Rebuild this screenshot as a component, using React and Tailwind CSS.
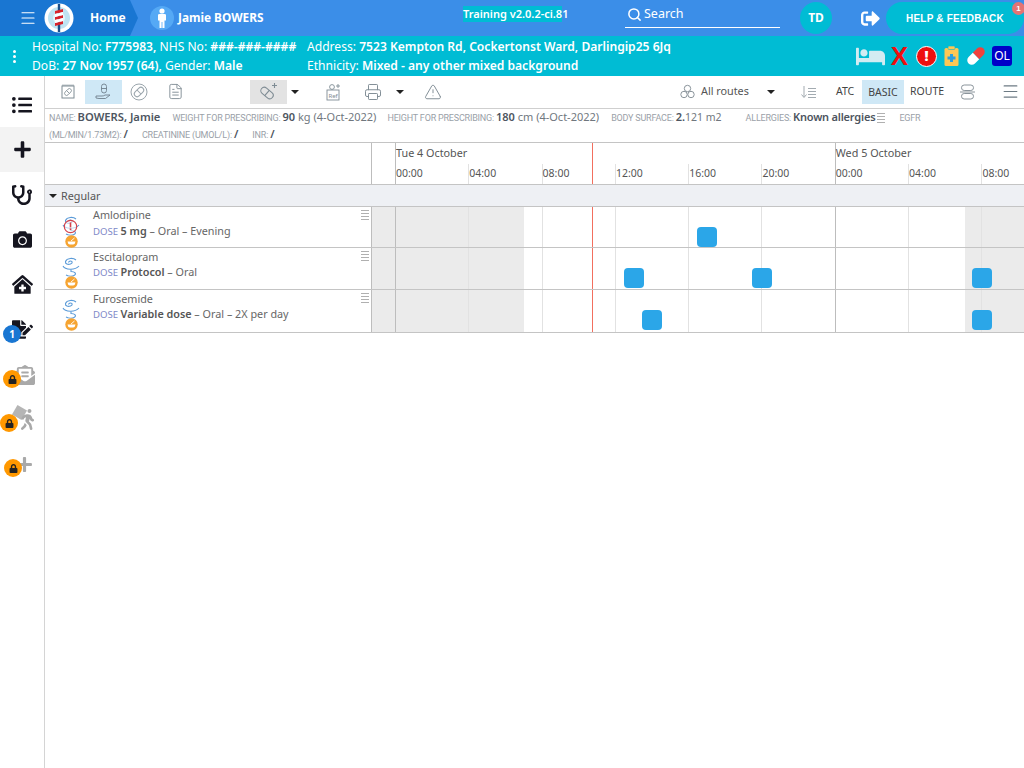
import React from "react";
import {
  FaBed,
  FaCamera,
  FaClinicMedical,
  FaEnvelopeOpenText,
  FaFileSignature,
  FaListUl,
  FaLock,
  FaPlus,
  FaStethoscope,
  FaSignOutAlt,
  FaWalking,
} from "react-icons/fa";
import { Search, Menu, TriangleAlert, Printer, FileText } from "lucide-react";

const hours = ["00:00", "04:00", "08:00", "12:00", "16:00", "20:00", "00:00", "04:00", "08:00"];

const drugs = [
  { name: "Amlodipine", dose: "5 mg", rest: " – Oral – Evening", alert: true, h: "h-[41px]", doses: [{ x: 302, y: 20 }] },
  { name: "Escitalopram", dose: "Protocol", rest: " – Oral", h: "h-[42px]", doses: [{ x: 229, y: 20 }, { x: 357, y: 20 }, { x: 577, y: 20 }] },
  { name: "Furosemide", dose: "Variable dose", rest: " – Oral – 2X per day", h: "h-[43px]", doses: [{ x: 247, y: 20 }, { x: 577, y: 20 }] },
];

const Caret = ({ className = "" }) => (
  <span className={`inline-block w-0 h-0 border-l-[4px] border-r-[4px] border-t-[4px] border-l-transparent border-r-transparent border-t-[#222] ${className}`} />
);

const Logo = () => (
  <svg width="30" height="30" viewBox="0 0 30 30" className="ml-[7px] shrink-0">
    <circle cx="15" cy="15" r="14.5" fill="#fff" />
    <circle cx="15" cy="15" r="11" fill="#bfe4f2" />
    <circle cx="15" cy="15" r="6" fill="#e4f4fa" />
    <rect x="13.8" y="1" width="2.4" height="28" fill="#1b4f8a" />
    <path d="M11 8 L19 6 L19 9 L11 11 Z M11 14 L19 12 L19 15 L11 17 Z M11 20 L19 18 L19 21 L11 23 Z" fill="#d8232a" />
    <path d="M11 11 L19 9 L19 12 L11 14 Z M11 17 L19 15 L19 18 L11 20 Z" fill="#fff" />
  </svg>
);

const PersonBadge = () => (
  <span className="w-6 h-6 rounded-full bg-[#55a9f5] flex items-center justify-center">
    <svg width="10" height="20" viewBox="0 0 10 20" fill="#fff">
      <circle cx="5" cy="3" r="2.6" />
      <path d="M1 7 Q1 6 2.5 6 H7.5 Q9 6 9 7 V12.5 H7.5 V20 H5.4 V14 H4.6 V20 H2.5 V12.5 H1 Z" />
    </svg>
  </span>
);

const Capsule = () => (
  <svg width="22" height="22" viewBox="0 0 22 22">
    <g transform="rotate(-45 11 11)">
      <path d="M11 6.5 H17 A4.5 4.5 0 0 1 17 15.5 H11 Z" fill="#f0413c" />
      <path d="M11 6.5 H5 A4.5 4.5 0 0 0 5 15.5 H11 Z" fill="#fff" />
    </g>
  </svg>
);

const Clipboard = () => (
  <svg width="15" height="20" viewBox="0 0 15 20">
    <rect x="0.5" y="2" width="14" height="18" rx="1.5" fill="#fdc755" />
    <rect x="4" y="0" width="7" height="3.5" rx="1" fill="#fdc755" stroke="#00bcd4" strokeWidth="0.6" />
    <path d="M6 8 H9 V10.5 H11.5 V13.5 H9 V16 H6 V13.5 H3.5 V10.5 H6 Z" fill="#2b9fe0" />
  </svg>
);

// rod and serpent style mark used beside each medication
const DrugIcon = ({ alert }) => (
  <div className="relative w-[26px] h-full">
    <svg width="18" height="20" viewBox="0 0 18 20" fill="none" stroke="#5b9bd8" strokeWidth="1.1" className="absolute left-[17px] top-[9px]">
      <path d="M14 3 C11 0.5 5 1 3.5 4.5 C3 7 6 8 8.5 7 C11 6 10.5 4 8.5 4 C7 4 6.5 5 7 5.5" />
      <path d="M1 9 C3 13 13 13.5 17 9" />
      <path d="M9 12.5 V14.5 C13 14.5 15 17 12 18.5 C10 19.5 6 19 4 18" />
    </svg>
    {alert && (
      <svg width="15" height="15" viewBox="0 0 15 15" className="absolute left-[18px] top-[12px]">
        <circle cx="7.5" cy="7.5" r="6.2" fill="#fff" fillOpacity="0.6" stroke="#d4434c" strokeWidth="1.2" />
        <rect x="6.7" y="3.4" width="1.6" height="5" fill="#d4434c" />
        <rect x="6.7" y="9.4" width="1.6" height="1.7" fill="#d4434c" />
      </svg>
    )}
    <svg width="13" height="13" viewBox="0 0 13 13" className="absolute left-[20px] top-[28px]">
      <circle cx="6.5" cy="6.5" r="6.2" fill="#f6a431" />
      <path d="M2.5 6.6 H10.5 Q10.3 9.2 8 9.6 H5 Q2.7 9.2 2.5 6.6 Z" fill="#fff" />
      <path d="M6 6 L9.5 3" stroke="#fff" strokeWidth="0.9" />
    </svg>
  </div>
);

const MiniMenu = () => (
  <span className="flex flex-col gap-[2px] w-[8px]">
    <span className="h-px bg-[#b0b0b0]" />
    <span className="h-px bg-[#b0b0b0]" />
    <span className="h-px bg-[#b0b0b0]" />
    <span className="h-px bg-[#b0b0b0]" />
  </span>
);

const Label = ({ children }) => <span className="font-['Roboto',sans-serif] text-[9px] text-[#9aa1a8] tracking-[-0.2px]">{children}</span>;

const Value = ({ children, className = "" }) => <b className={`font-semibold text-[#4d5560] ${className}`}>{children}</b>;

const SideItem = ({ icon, active, badge, badgeColor, badgeClass, extra }) => (
  <div className={`relative h-[45px] flex items-center justify-center ${active ? "bg-[#f3f3f3]" : ""}`}>
    {extra}
    {icon}
    {badge && (
      <span className={`absolute w-[18px] h-[18px] rounded-full flex items-center justify-center text-white text-[10px] font-bold ${badgeColor} ${badgeClass}`}>
        {badge}
      </span>
    )}
  </div>
);

const HourLines = () => (
  <div className="absolute inset-0 flex">
    {hours.map((h, i) => (
      <div key={i} className={`w-[73.3px] shrink-0 border-l ${i === 0 || i === 6 ? "border-[#bdbdbd]" : "border-[#e2e2e2]"}`} />
    ))}
  </div>
);

export default function App() {
  return (
    <div className="w-[1024px] h-[768px] overflow-hidden bg-white flex flex-col font-['Noto_Sans',sans-serif] text-[#555]">
      {/* Top bar */}
      <header className="h-9 bg-[#3b8ee8] flex items-center text-white shrink-0">
        <div className="w-[138px] h-9 bg-[#1976d2] [clip-path:polygon(0_0,130px_0,138px_50%,130px_100%,0_100%)] flex items-center shrink-0">
          <Menu size={18} strokeWidth={1.6} className="ml-[19px]" />
          <Logo />
          <span className="ml-[16px] text-[12px] font-bold">Home</span>
        </div>
        <div className="ml-[12px]"><PersonBadge /></div>
        <span className="ml-[4px] text-[11.8px] font-bold w-[285px] whitespace-nowrap">Jamie BOWERS</span>
        <span className="w-[99px] h-4 bg-[#00bcd4] text-[11px] font-semibold leading-4 text-center mb-[8px] shrink-0 whitespace-nowrap">Training v2.0.2-ci.81</span>
        <div className="ml-[63px] w-[155px] h-[28px] self-start border-b border-white flex items-center pl-[2px] gap-[2px]">
          <Search size={15} strokeWidth={2.4} className="mt-[2px]" />
          <span className="text-[12.5px] mt-[2px]">Search</span>
        </div>
        <span className="ml-[20px] w-8 h-8 rounded-full bg-[#00bcd4] flex items-center justify-center text-[12px] font-bold">TD</span>
        <FaSignOutAlt size={19} className="ml-[29px]" />
        <div className="relative ml-[6px] w-[138px] h-8 rounded-full bg-[#00bcd4] flex items-center justify-center font-['Liberation_Sans',sans-serif] text-[10px] font-bold tracking-[0.2px]">
          HELP &amp; FEEDBACK
          <span className="absolute right-[-1px] top-0 w-[13px] h-[13px] rounded-full bg-[#e57373] flex items-center justify-center text-[8px]">1</span>
        </div>
      </header>

      {/* Patient banner */}
      <div className="h-10 bg-[#00bcd4] flex items-center text-white text-[12.1px] leading-[19px] shrink-0">
        <div className="w-8 flex flex-col items-center gap-[2px] pr-[3px]">
          <span className="w-[3px] h-[3px] rounded-full bg-white" />
          <span className="w-[3px] h-[3px] rounded-full bg-white" />
          <span className="w-[3px] h-[3px] rounded-full bg-white" />
        </div>
        <div className="w-[275px] whitespace-nowrap">
          <div>Hospital No: <b className="font-semibold">F775983,</b> NHS No: <b className="font-semibold">###-###-####</b></div>
          <div>DoB: <b className="font-semibold">27 Nov 1957 (64),</b> Gender: <b className="font-semibold">Male</b></div>
        </div>
        <div className="whitespace-nowrap">
          <div>Address: <b className="font-semibold">7523 Kempton Rd, Cockertonst Ward, Darlingip25 6Jq</b></div>
          <div>Ethnicity: <b className="font-semibold">Mixed - any other mixed background</b></div>
        </div>
        <div className="ml-auto flex items-center pr-[12px]">
          <FaBed size={29} className="text-[#d3ecf2]" />
          <span className="ml-[6px] text-[#ee0f0f] text-[26px] leading-none font-black font-['Liberation_Sans',sans-serif]">X</span>
          <span className="ml-[8px] w-[21px] h-[21px] rounded-full bg-[#ee0f0f] border border-white flex items-center justify-center text-white text-[14px] font-black leading-none">!</span>
          <span className="ml-[7px] flex"><Clipboard /></span>
          <span className="ml-[6px] flex"><Capsule /></span>
          <span className="ml-[5px] w-5 h-5 rounded-[3px] bg-[#0000c8] text-white text-[12px] leading-5 text-center">OL</span>
        </div>
      </div>

      <div className="flex flex-1 min-h-0">
        {/* Sidebar */}
        <aside className="w-[45px] shrink-0 border-r border-[#d4d4d4] pt-[6px] text-[#15151f]">
          <SideItem icon={<FaListUl size={20} />} />
          <SideItem active icon={<FaPlus size={19} />} />
          <SideItem icon={<FaStethoscope size={20} />} />
          <SideItem icon={<FaCamera size={19} />} />
          <SideItem icon={<FaClinicMedical size={21} />} />
          <SideItem icon={<FaFileSignature size={21} />} badge="1" badgeColor="bg-[#1976d2]" badgeClass="left-[3px] top-[18px]" />
          <SideItem icon={<FaEnvelopeOpenText size={20} className="text-[#a9a9a9] ml-[5px]" />} badge={<FaLock size={9} className="text-[#222]" />} badgeColor="bg-[#ff9800]" badgeClass="left-[3px] top-[18px]" />
          <SideItem
            extra={<span className="absolute left-[14px] top-[10px] w-[11px] h-[11px] rotate-[30deg] bg-[#b5b5b5]" />}
            icon={<FaWalking size={21} className="relative text-[#a9a9a9] ml-[10px]" />}
            badge={<FaLock size={9} className="text-[#222]" />}
            badgeColor="bg-[#ff9800]"
            badgeClass="left-0 top-[17px]"
          />
          <SideItem icon={<FaPlus size={17} className="text-[#a9a9a9] ml-[4px]" />} badge={<FaLock size={9} className="text-[#222]" />} badgeColor="bg-[#ff9800]" badgeClass="left-[4px] top-[17px]" />
        </aside>

        <main className="flex-1 min-w-0 flex flex-col">
          {/* Toolbar */}
          <div className="h-[33px] border-b border-[#cfcfcf] flex items-center pb-[1px] text-[#7f8c94] shrink-0">
            <svg width="14" height="15" viewBox="0 0 14 15" fill="none" stroke="#7f8c94" className="ml-[16px]">
              <rect x="1" y="2" width="12" height="12" />
              <path d="M2 0.5 V2 M4 0.5 V2 M6 0.5 V2 M8 0.5 V2 M10 0.5 V2 M12 0.5 V2" />
              <g transform="rotate(-45 7 8)">
                <rect x="3" y="6" width="8" height="4" rx="2" strokeWidth="0.8" />
                <path d="M7 6 V10" strokeWidth="0.8" />
              </g>
            </svg>
            <div className="ml-[10px] w-[37px] h-6 bg-[#cfe8f6] flex items-center justify-center">
              <svg width="18" height="18" viewBox="0 0 18 18" fill="none" stroke="#70808c" strokeWidth="0.9">
                <rect x="6.5" y="1" width="5" height="9" rx="2.5" />
                <path d="M6.5 5.5 H11.5 M1 13 H7 Q9 13 10 12 H15 L10.5 15.5 H4 L1 15 Z" />
              </svg>
            </div>
            <svg width="18" height="18" viewBox="0 0 18 18" fill="none" stroke="#9aa5ac" className="ml-[8px]">
              <circle cx="9" cy="9" r="8" />
              <g transform="rotate(-45 9 9)">
                <rect x="3.5" y="6.2" width="11" height="5.6" rx="2.8" />
                <path d="M9 6.2 V11.8" />
              </g>
            </svg>
            <FileText size={17} strokeWidth={1.3} className="ml-[19px]" />
            <div className="ml-[66px] w-[37px] h-6 bg-[#e3e3e3] flex items-center justify-center">
              <svg width="20" height="20" viewBox="0 0 20 20" fill="none" stroke="#7f8c94" strokeWidth="1.1">
                <g transform="rotate(40 8 11)">
                  <rect x="1" y="7.5" width="14" height="7" rx="3.5" />
                  <path d="M8 7.5 V14.5" />
                </g>
                <path d="M15.5 1 V6 M13 3.5 H18" />
              </svg>
            </div>
            <Caret className="ml-[4px]" />
            <svg width="15" height="18" viewBox="0 0 15 18" fill="none" stroke="#7f8c94" strokeWidth="0.9" className="ml-[27px]">
              <rect x="1" y="7" width="12" height="10" />
              <circle cx="6" cy="4" r="2.4" />
              <path d="M12 1 V5 M10 3 H14" />
              <text x="7" y="15" fontSize="6" textAnchor="middle" fill="#7f8c94" stroke="none">Ref</text>
            </svg>
            <Printer size={18} strokeWidth={1.3} className="ml-[23px]" />
            <Caret className="ml-[14px]" />
            <TriangleAlert size={18} strokeWidth={1.3} className="ml-[20px]" />

            <svg width="15" height="15" viewBox="0 0 15 15" fill="none" stroke="#8a949b" className="ml-[238px]">
              <circle cx="7.5" cy="4.5" r="3.2" />
              <circle cx="4" cy="10.5" r="3.2" />
              <circle cx="11" cy="10.5" r="3.2" />
            </svg>
            <span className="ml-[6px] w-[47px] text-[10.8px] text-[#555] whitespace-nowrap">All routes</span>
            <Caret className="ml-[19px]" />
            <svg width="16" height="14" viewBox="0 0 16 14" fill="none" stroke="#a3abb1" className="ml-[26px]">
              <path d="M3 1 V12 M0.5 9.5 L3 12.5 L5.5 9.5 M7 3.5 H15 M7 6.5 H15 M7 9.5 H15 M7 12.5 H15" />
            </svg>
            <span className="ml-[19px] w-[19px] text-[10.5px] text-[#444]">ATC</span>
            <span className="ml-[7px] w-[42px] h-6 bg-[#cfe8f6] text-[10.5px] text-[#444] leading-6 text-center">BASIC</span>
            <span className="ml-[6px] w-[34px] text-[10.5px] text-[#444]">ROUTE</span>
            <svg width="15" height="18" viewBox="0 0 15 18" fill="none" stroke="#8a949b" className="ml-[16px]">
              <rect x="1.5" y="2" width="12" height="5.5" rx="2.7" />
              <rect x="1.5" y="10.5" width="12" height="5.5" rx="2.7" />
              <path d="M0 9 H15" />
            </svg>
            <Menu size={19} strokeWidth={1.5} className="ml-[26px] text-[#6d7b84]" />
          </div>

          {/* Patient details */}
          <div className="h-[33px] px-[4px] text-[11px] leading-[16px] text-[#70777e] shrink-0 whitespace-nowrap">
            <Label>NAME: </Label><Value className="text-[11.2px]">BOWERS, Jamie</Value>
            <span className="ml-[12px]"><Label>WEIGHT FOR PRESCRIBING: </Label></span><Value>90</Value> kg (4-Oct-2022)
            <span className="ml-[11px]"><Label>HEIGHT FOR PRESCRIBING: </Label></span><Value>180</Value> cm (4-Oct-2022)
            <span className="ml-[12px]"><Label>BODY SURFACE: </Label></span><Value>2.</Value><span className="text-[10.5px]">121 m2</span>
            <span className="ml-[24px]"><Label>ALLERGIES: </Label></span><Value className="tracking-[-0.2px]">Known allergies</Value>
            <span className="inline-block ml-[2px] align-middle"><MiniMenu /></span>
            <span className="ml-[14px]"><Label>EGFR</Label></span>
            <br />
            <Label>(ML/MIN/1.73M2): </Label><Value>/</Value>
            <span className="ml-[14px]"><Label>CREATININE (UMOL/L): </Label></span><Value>/</Value>
            <span className="ml-[14px]"><Label>INR: </Label></span><Value>/</Value>
          </div>

          {/* Timeline header */}
          <div className="h-[43px] border-y border-[#c4c4c4] flex shrink-0">
            <div className="w-[327px] shrink-0 border-r border-[#bdbdbd]" />
            <div className="w-[23px] shrink-0" />
            <div className="relative flex-1 overflow-hidden">
              <div className="absolute inset-0 flex">
                {hours.map((h, i) => (
                  <div key={i} className={`relative w-[73.3px] shrink-0 ${i === 0 || i === 6 ? "border-l border-[#bdbdbd]" : ""}`}>
                    {i !== 0 && i !== 6 && <span className="absolute left-0 top-[21px] bottom-0 border-l border-[#e2e2e2]" />}
                    {i === 0 && <span className="absolute left-0 top-[2px] text-[10.8px] whitespace-nowrap">Tue 4 October</span>}
                    {i === 6 && <span className="absolute left-0 top-[2px] text-[10.8px] whitespace-nowrap">Wed 5 October</span>}
                    <span className={`absolute top-[23px] text-[10.5px] ${i === 0 || i === 6 ? "left-0" : "left-[1px]"}`}>{h}</span>
                  </div>
                ))}
              </div>
              <span className="absolute left-[197px] top-0 bottom-0 border-l border-[#f26f5e]" />
            </div>
          </div>

          {/* Group row */}
          <div className="h-[22px] bg-[#eef0f4] border-b border-[#c4c4c4] flex items-center pl-[4px] gap-[4px] text-[10.8px] pt-[1px] shrink-0">
            <Caret />
            <span>Regular</span>
          </div>

          {/* Drug rows */}
          {drugs.map((d) => (
            <div key={d.name} className={`${d.h} border-b border-[#c4c4c4] flex shrink-0`}>
              <div className="relative w-[327px] shrink-0 border-r border-[#bdbdbd] flex">
                <DrugIcon alert={d.alert} />
                <div className="ml-[22px] text-[10.8px] leading-[16px]">
                  <div className={d.alert ? "text-[#666]" : "mt-[1px] text-[#666]"}>{d.name}</div>
                  <div className={d.alert ? "" : "-mt-[1px]"}>
                    <span className="text-[9.6px] text-[#8088c8]">DOSE </span>
                    <b className="font-semibold text-[#555]">{d.dose}</b>
                    <span className="text-[#666]">{d.rest}</span>
                  </div>
                </div>
                <span className="absolute right-[2px] top-[3px]"><MiniMenu /></span>
              </div>
              <div className="w-[23px] shrink-0 bg-[#ebebeb]" />
              <div className="relative flex-1 overflow-hidden">
                <div className="absolute left-0 top-0 bottom-0 w-[129px] bg-[#ebebeb]" />
                <div className="absolute left-[570px] top-0 bottom-0 right-0 bg-[#ebebeb]" />
                <HourLines />
                <span className="absolute left-[197px] top-0 bottom-0 border-l border-[#f26f5e]" />
                {d.doses.map((p) => (
                  <span
                    key={p.x}
                    className="absolute w-5 h-5 rounded-[4px] bg-[#2ba6e8]"
                    style={{ left: p.x, top: p.y }}
                  />
                ))}
              </div>
            </div>
          ))}
        </main>
      </div>
    </div>
  );
}
